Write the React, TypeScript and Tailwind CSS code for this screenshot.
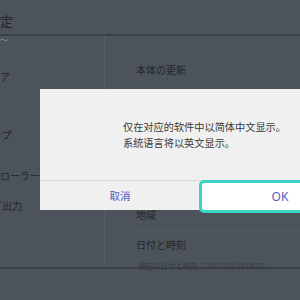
const jp = { fontFamily: '"Noto Sans CJK JP", "Noto Sans", sans-serif' }

const sideItems = [
  { label: 'ア', mt: 'mt-[35px]', ml: 'ml-0' },
  { label: 'グループ', mt: 'mt-[46px]', ml: 'ml-[-28px]' },
  { label: 'コントローラー', mt: 'mt-[29px]', ml: 'ml-[-30px]' },
  { label: 'テレビ出力', mt: 'mt-[18px]', ml: 'ml-[-28px]' }
]

export default function App() {
  return (
    <div
      className="relative h-[300px] w-[300px] overflow-hidden bg-[#4d535b]"
      style={jp}
    >
      {/* header */}
      <div className="flex h-[36px] items-end border-b-2 border-[#3b4046] pb-[6px]">
        <span className="ml-[-13px] text-[13px] leading-[14px] text-[#22262b]">設定</span>
      </div>
      <div className="absolute left-0 top-[36px] text-[8px] leading-none text-[#8a9098]">〜</div>

      <div className="flex h-[233px] border-b-2 border-[#3b4046]">
        {/* sidebar */}
        <div className="flex w-[105px] flex-col overflow-hidden border-r border-[#575d65]">
          {sideItems.map((item) => (
            <div
              key={item.label}
              className={`${item.mt} ${item.ml} whitespace-nowrap text-[10px] leading-[12px] text-[#22262b]`}
            >
              {item.label}
            </div>
          ))}
        </div>

        {/* right pane */}
        <div className="flex flex-1 flex-col pl-[31px] text-[#22262b]">
          <div className="mt-[27px] text-[10px] leading-[14px]">本体の更新</div>
          <div className="mt-[20px] border-t border-[#555b63]" />
          <div className="mt-[110px] text-[10px] leading-[14px]">地域</div>
          <div className="mt-[8px] border-t border-[#555b63]" />
          <div className="mt-[7px] text-[10px] leading-[14px]">日付と時刻</div>
          <div className="mt-[10px] pl-[2px] text-[7.5px] leading-[8px] text-[#33383e]">
            現在の日付と時刻：2017/10/19 08:52
          </div>
        </div>
      </div>

      {/* dialog */}
      <div className="absolute left-[40px] top-[89px] w-[320px] bg-[#f0f0f0]">
        <div
          className="flex h-[91px] flex-col justify-center pl-[83px] text-[10.2px] leading-[16px] text-[#3a3a3a]"
          style={{ fontFamily: '"Noto Sans CJK SC", "Noto Sans", sans-serif' }}
        >
          <p>仅在对应的软件中以简体中文显示。</p>
          <p>系统语言将以英文显示。</p>
        </div>
        <div className="flex h-[30px] border-t border-[#d6d6d6]">
          <button
            className="flex w-[160px] items-center justify-center text-[10.5px] text-[#4b5bc4]"
            style={{ fontFamily: '"Noto Sans CJK SC", sans-serif' }}
          >
            取消
          </button>
        </div>
        <button
          className="absolute left-[159px] top-[91px] flex h-[33px] w-[170px] items-center justify-center rounded-[5px] border-[3px] border-[#3ed4c4] bg-white pr-[8px] text-[12px] text-[#4f5ec2]"
          style={{ fontFamily: '"Noto Sans", sans-serif' }}
        >
          OK
        </button>
      </div>
    </div>
  )
}
